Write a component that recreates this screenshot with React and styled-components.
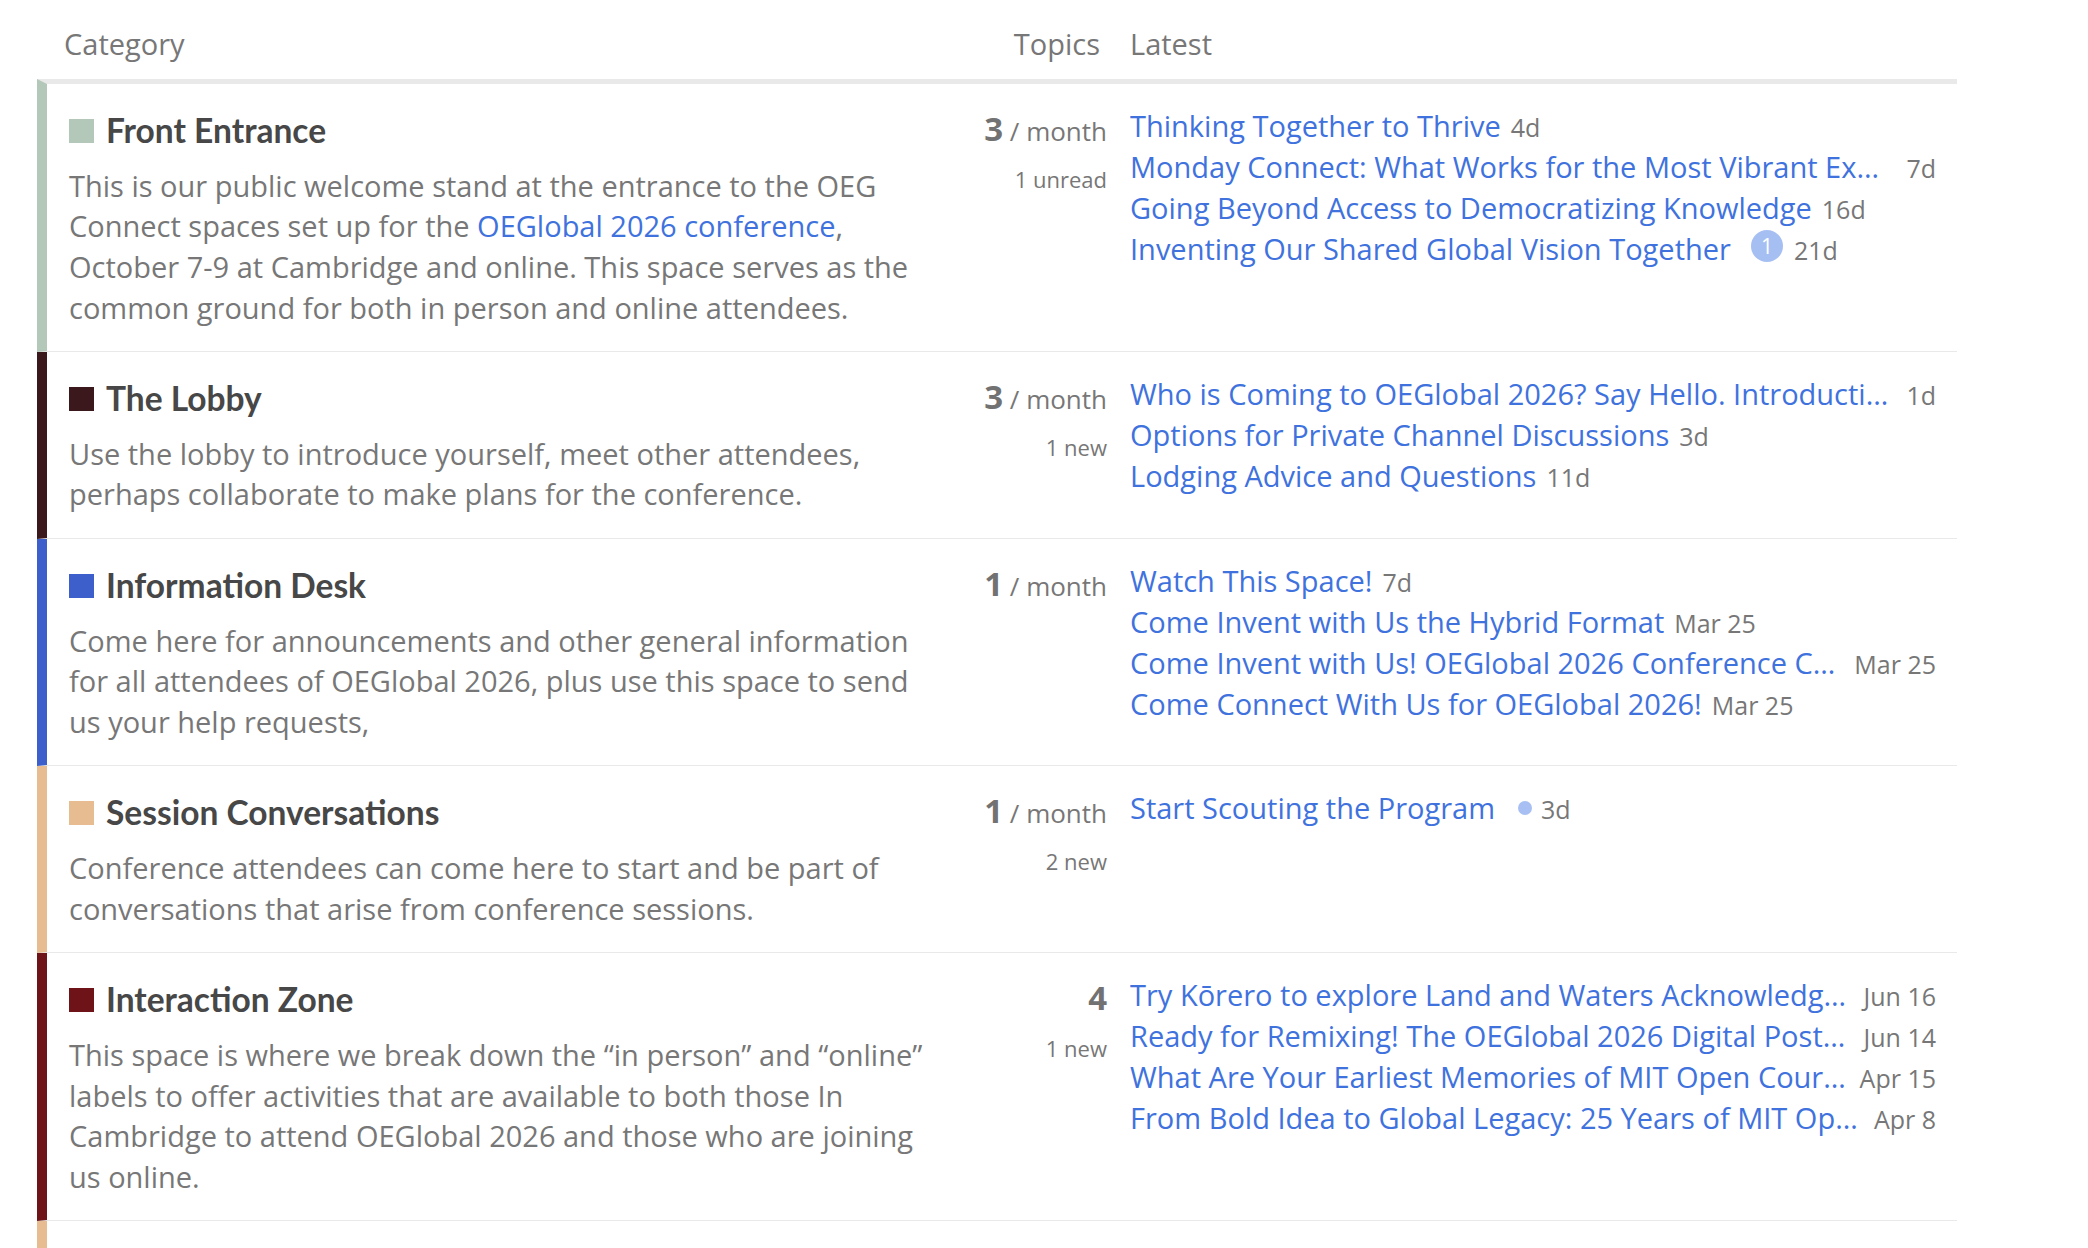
import React from "react";
import styled, { createGlobalStyle } from "styled-components";

const GlobalStyle = createGlobalStyle`
  html, body {
    margin: 0;
    padding: 0;
    background: #ffffff;
  }
  body {
    font-family: "Open Sans", "Noto Sans", sans-serif;
    color: #777777;
  }
  *, *::before, *::after {
    box-sizing: border-box;
  }
`;

const BLUE = "#4072de";
const MUTED = "#777777";
const RULE = "#e9e9e9";

const Page = styled.div`
  height: 100vh;
  overflow: hidden;
  padding-left: 37px;
`;

const Table = styled.div`
  width: 1920px;
`;

const HeadRow = styled.div`
  display: grid;
  grid-template-columns: 918px 163px 839px;
  font-size: 29px;
  line-height: 1.4;
  color: ${MUTED};
`;

const HeadCell = styled.div`
  padding: 24px ${(p) => p.$padRight || 0}px 14px ${(p) => p.$padLeft || 0}px;
  text-align: ${(p) => p.$align || "left"};
`;

const Row = styled.div`
  display: grid;
  grid-template-columns: 908px 163px 839px;
  border-left: 10px solid ${(p) => p.$color};
  border-top: ${(p) => (p.$first ? `5px solid ${RULE}` : "0")};
  border-bottom: 1px solid ${RULE};
  min-height: ${(p) => (p.$stub ? "120px" : "0")};
`;

const CategoryCell = styled.div`
  padding: 26px 15px 22.5px 22px;
`;

const CategoryTitle = styled.div`
  font-family: "Lato", "Open Sans", sans-serif;
  font-weight: 700;
  font-size: 33.5px;
  line-height: 1.2;
  color: #474747;
  white-space: nowrap;
`;

const Swatch = styled.span`
  display: inline-block;
  width: 25px;
  height: 24px;
  margin-right: 12px;
  background: ${(p) => p.$color};
`;

const Description = styled.div`
  margin-top: 16px;
  font-size: 29px;
  line-height: 1.4;
  color: ${MUTED};
`;

const InlineLink = styled.a`
  color: ${BLUE};
  text-decoration: none;
`;

const TopicsCell = styled.div`
  padding: 25px 11px 0 0;
  text-align: right;
  color: ${MUTED};
`;

const CountLine = styled.div`
  font-size: 33px;
  line-height: 40px;
  white-space: nowrap;
`;

const Count = styled.span`
  font-weight: 700;
  color: #727272;
`;

const Unit = styled.span`
  font-size: 26px;
  line-height: 1;
`;

const SubLabel = styled.div`
  margin-top: 15px;
  font-size: 22px;
  line-height: 30px;
`;

const LatestCell = styled.div`
  padding: 21px 21px 20px 12px;
  min-width: 0;
`;

const TopicLine = styled.div`
  display: flex;
  align-items: baseline;
  font-size: 29px;
  line-height: 41px;
  min-width: 0;
`;

const TopicLink = styled.a`
  flex: 0 1 auto;
  min-width: 0;
  color: ${BLUE};
  text-decoration: none;
  white-space: nowrap;
  overflow: hidden;
  text-overflow: ellipsis;
`;

const Age = styled.span`
  flex: none;
  margin-left: ${(p) => p.$gap || 10}px;
  font-size: 25px;
  line-height: 1;
  color: ${MUTED};
  white-space: nowrap;
`;

const UnreadBadge = styled.span`
  flex: none;
  align-self: center;
  display: inline-flex;
  align-items: center;
  justify-content: center;
  width: 32px;
  height: 32px;
  margin: 0 0 4px 20px;
  border-radius: 50%;
  background: #a6bff3;
  color: #ffffff;
  font-size: 21px;
  line-height: 1;
`;

const NewDot = styled.span`
  flex: none;
  align-self: center;
  width: 14px;
  height: 14px;
  margin-left: 23px;
  border-radius: 50%;
  background: #a7bff2;
`;

const categories = [
  {
    name: "Front Entrance",
    color: "#b3c8b8",
    description: (
      <>
        This is our public welcome stand at the entrance to the OEG Connect
        spaces set up for the{" "}
        <InlineLink href="#">OEGlobal 2026 conference</InlineLink>, October 7-9
        at Cambridge and online. This space serves as the common ground for
        both in person and online attendees.
      </>
    ),
    count: 3,
    per: "month",
    sub: "1 unread",
    topics: [
      { title: "Thinking Together to Thrive", age: "4d" },
      {
        title: "Monday Connect: What Works for the Most Vibrant Experiences?",
        age: "7d",
      },
      { title: "Going Beyond Access to Democratizing Knowledge", age: "16d" },
      {
        title: "Inventing Our Shared Global Vision Together",
        age: "21d",
        unread: 1,
      },
    ],
  },
  {
    name: "The Lobby",
    color: "#3a181b",
    description:
      "Use the lobby to introduce yourself, meet other attendees, perhaps collaborate to make plans for the conference.",
    count: 3,
    per: "month",
    sub: "1 new",
    topics: [
      {
        title:
          "Who is Coming to OEGlobal 2026? Say Hello. Introductions Welcome",
        age: "1d",
      },
      { title: "Options for Private Channel Discussions", age: "3d" },
      { title: "Lodging Advice and Questions", age: "11d" },
    ],
  },
  {
    name: "Information Desk",
    color: "#3d5fcc",
    description:
      "Come here for announcements and other general information for all attendees of OEGlobal 2026, plus use this space to send us your help requests,",
    count: 1,
    per: "month",
    topics: [
      { title: "Watch This Space!", age: "7d" },
      { title: "Come Invent with Us the Hybrid Format", age: "Mar 25" },
      {
        title:
          "Come Invent with Us! OEGlobal 2026 Conference Call for Proposals",
        age: "Mar 25",
      },
      { title: "Come Connect With Us for OEGlobal 2026!", age: "Mar 25" },
    ],
  },
  {
    name: "Session Conversations",
    color: "#e8bc91",
    description:
      "Conference attendees can come here to start and be part of conversations that arise from conference sessions.",
    count: 1,
    per: "month",
    sub: "2 new",
    topics: [{ title: "Start Scouting the Program", age: "3d", isNew: true }],
  },
  {
    name: "Interaction Zone",
    color: "#6e1419",
    description:
      "This space is where we break down the \u201cin person\u201d and \u201conline\u201d labels to offer activities that are available to both those In Cambridge to attend OEGlobal 2026 and those who are joining us online.",
    count: 4,
    sub: "1 new",
    topics: [
      {
        title: "Try K\u014drero to explore Land and Waters Acknowledgements",
        age: "Jun 16",
      },
      {
        title: "Ready for Remixing! The OEGlobal 2026 Digital Poster Collection",
        age: "Jun 14",
      },
      {
        title: "What Are Your Earliest Memories of MIT Open CourseWare?",
        age: "Apr 15",
      },
      {
        title: "From Bold Idea to Global Legacy: 25 Years of MIT OpenCourseWare",
        age: "Apr 8",
      },
    ],
  },
];

function Topic({ topic }) {
  let gap = 10;
  if (topic.unread) gap = 11;
  if (topic.isNew) gap = 9;
  return (
    <TopicLine>
      <TopicLink href="#">{topic.title}</TopicLink>
      {topic.unread ? <UnreadBadge>{topic.unread}</UnreadBadge> : null}
      {topic.isNew ? <NewDot /> : null}
      <Age $gap={gap}>{topic.age}</Age>
    </TopicLine>
  );
}

function CategoryRow({ cat, first }) {
  return (
    <Row $color={cat.color} $first={first}>
      <CategoryCell>
        <CategoryTitle>
          <Swatch $color={cat.color} />
          {cat.name}
        </CategoryTitle>
        <Description>{cat.description}</Description>
      </CategoryCell>
      <TopicsCell>
        <CountLine>
          <Count>{cat.count}</Count>
          {cat.per ? <Unit> / {cat.per}</Unit> : null}
        </CountLine>
        {cat.sub ? <SubLabel>{cat.sub}</SubLabel> : null}
      </TopicsCell>
      <LatestCell>
        {cat.topics.map((t) => (
          <Topic key={t.title} topic={t} />
        ))}
      </LatestCell>
    </Row>
  );
}

export default function App() {
  return (
    <>
      <GlobalStyle />
      <Page>
        <Table>
          <HeadRow>
            <HeadCell $padLeft={27}>Category</HeadCell>
            <HeadCell $align="right" $padRight={18}>
              Topics
            </HeadCell>
            <HeadCell $padLeft={12}>Latest</HeadCell>
          </HeadRow>
          {categories.map((cat, i) => (
            <CategoryRow key={cat.name} cat={cat} first={i === 0} />
          ))}
          <Row $color="#e8bc91" $stub />
        </Table>
      </Page>
    </>
  );
}
